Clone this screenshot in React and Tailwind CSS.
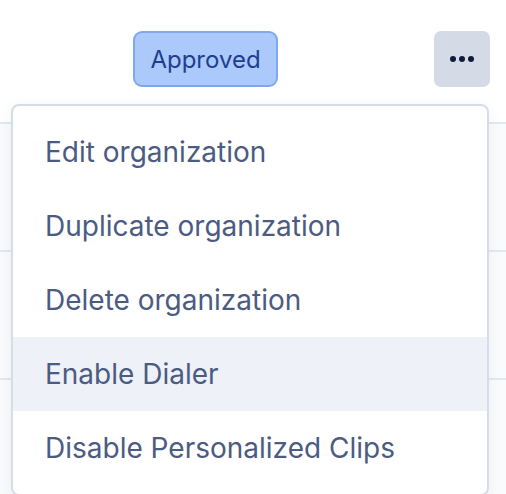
import React from "react";

const items = [
  "Edit organization",
  "Duplicate organization",
  "Delete organization",
  "Enable Dialer",
  "Disable Personalized Clips",
];

export default function App() {
  return (
    <div className="relative h-[494px] w-[506px] overflow-hidden bg-white font-['Inter',sans-serif]">
      {/* table rows behind the menu */}
      <div className="flex h-[124px] items-center border-b-2 border-[#e3e7ef] bg-white pb-[4px]">
        <div className="w-[133px]" />
        <span className="flex h-[56px] w-[145px] items-center justify-center rounded-[9px] border-2 border-[#7ea9f1] bg-[#abc9fb] pt-[1px] text-[24px] text-[#1e3f8f]">
          Approved
        </span>
        <div className="flex-1" />
        <button className="mr-[16px] flex h-[56px] w-[56px] items-center justify-center gap-[3px] rounded-[7px] bg-[#d5dbe6]">
          <span className="h-[6px] w-[6px] rounded-full bg-[#0f1b3a]" />
          <span className="h-[6px] w-[6px] rounded-full bg-[#0f1b3a]" />
          <span className="h-[6px] w-[6px] rounded-full bg-[#0f1b3a]" />
        </button>
      </div>
      <div className="h-[128px] border-b-2 border-[#e3e7ef] bg-[#fafbfc]" />
      <div className="h-[128px] border-b-2 border-[#e3e7ef] bg-[#fafbfc]" />
      <div className="h-[120px] bg-[#fafbfc]" />

      {/* dropdown menu */}
      <div className="absolute left-[11px] top-[104px] w-[478px] rounded-[8px] border-2 border-[#d6dce8] bg-white py-[9px] shadow-[0_4px_16px_rgba(15,23,42,0.06)]">
        {items.map((label) => (
          <div
            key={label}
            className={`flex h-[74px] items-center px-[32px] text-[28px] text-[#4b5b82] ${
              label === "Enable Dialer" ? "bg-[#eef1f8]" : ""
            }`}
          >
            {label}
          </div>
        ))}
      </div>
    </div>
  );
}
